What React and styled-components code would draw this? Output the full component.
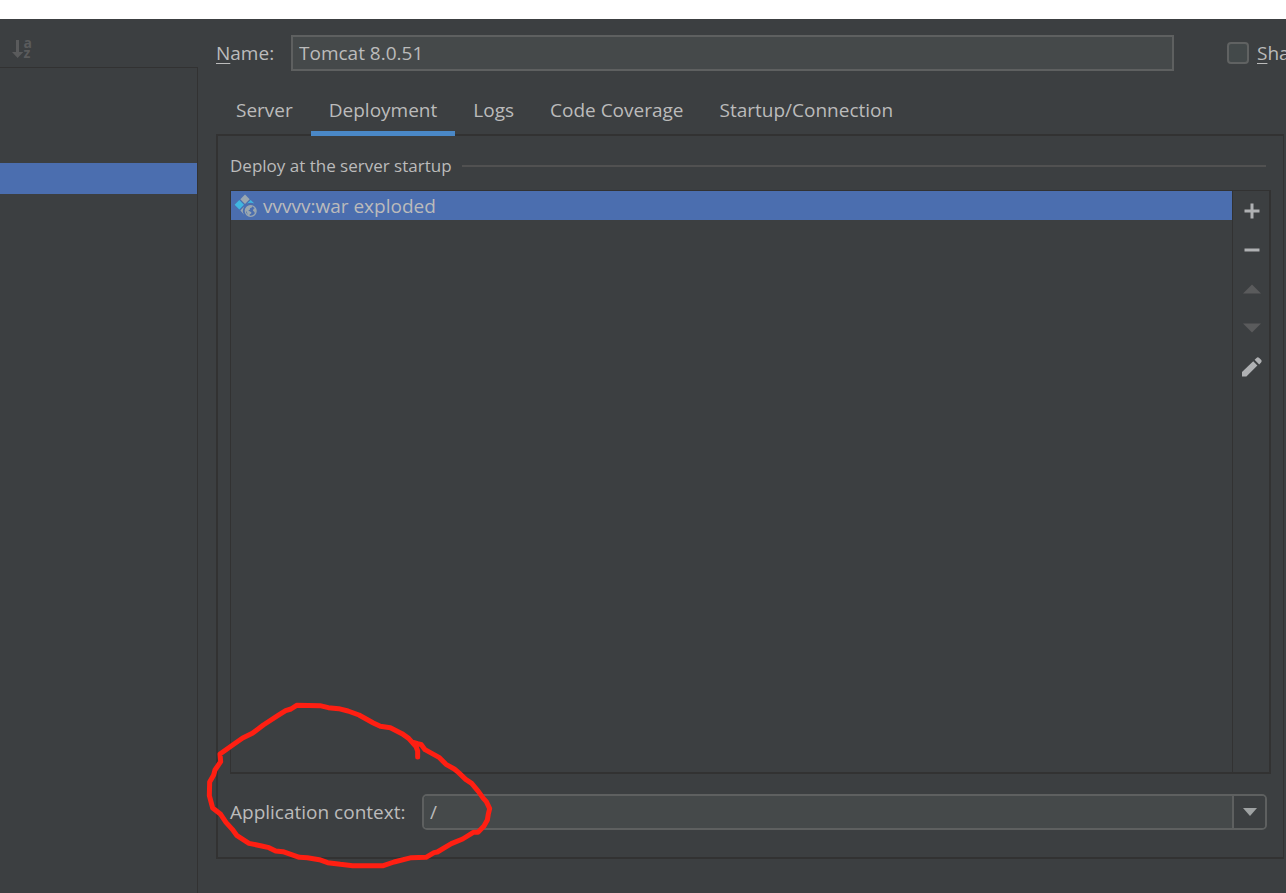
import { useState } from "react";
import styled, { createGlobalStyle } from "styled-components";

const GlobalStyle = createGlobalStyle`
  * {
    box-sizing: border-box;
  }

  body {
    margin: 0;
    background: #ffffff;
    overflow: hidden;
  }

  body, input, button {
    font-family: "Open Sans", "Noto Sans", sans-serif;
    font-size: 19px;
    color: #bbbbbb;
  }
`;

const Page = styled.div`
  min-height: 100vh;
  padding-top: 19px;
  display: flex;
`;

const Dialog = styled.div`
  flex: 1;
  min-width: 0;
  display: flex;
  background: #3c3f41;
`;

const Sidebar = styled.aside`
  flex: 0 0 198px;
  display: flex;
  flex-direction: column;
`;

const SidebarTools = styled.div`
  height: 48px;
  padding: 18px 0 0 10px;
`;

const ConfigList = styled.div`
  flex: 1;
  padding-top: 95px;
  border-top: 1px solid #323232;
  border-right: 1px solid #323232;
`;

const ConfigItem = styled.div`
  height: 31px;
  background: #4b6eaf;
`;

const Main = styled.main`
  flex: 1;
  min-width: 0;
  display: flex;
  flex-direction: column;
  padding-left: 18px;
`;

const NameRow = styled.div`
  display: flex;
  align-items: center;
  padding-top: 16px;
`;

const NameLabel = styled.label`
  flex: 0 0 75px;
`;

const Mnemonic = styled.span`
  text-decoration: underline;
  text-underline-offset: 3px;
`;

const NameInput = styled.input`
  flex: 1;
  min-width: 0;
  height: 36px;
  padding: 0 6px;
  background: #45494a;
  border: 2px solid #5e6060;
  outline: none;
`;

const ShareLabel = styled.label`
  flex: 0 0 59px;
  display: flex;
  align-items: center;
  gap: 8px;
  margin-left: 53px;
  overflow: hidden;
  white-space: nowrap;
`;

const Checkbox = styled.input`
  appearance: none;
  flex: none;
  width: 22px;
  height: 22px;
  margin: 0;
  background: #43494a;
  border: 2px solid #606262;
  border-radius: 4px;

  &:checked {
    background: #4b6eaf;
  }
`;

const Tabs = styled.div`
  display: flex;
  margin-top: 13px;
  padding-left: 2px;
`;

const Tab = styled.button`
  height: 52px;
  padding: 5px 18px 0;
  background: none;
  border: 0;
  border-bottom: 5px solid ${(props) => (props.$active ? "#4a88c7" : "transparent")};
  position: relative;
  z-index: 1;
  cursor: pointer;
`;

const Panel = styled.section`
  flex: 1;
  display: flex;
  flex-direction: column;
  position: relative;
  margin: -2px 2px 34px 0;
  padding: 18px 12px 27px;
  border: 2px solid #323232;
  border-right-width: 1px;
`;

const GroupTitle = styled.h2`
  display: flex;
  align-items: center;
  gap: 10px;
  margin: 0 5px 12px 0;
  font-size: 17px;
  font-weight: 400;
  line-height: 24px;

  &::after {
    content: "";
    flex: 1;
    height: 2px;
    background: #515151;
  }
`;

const Artifacts = styled.div`
  flex: 1;
  display: flex;
  border: 1px solid #323232;
  border-right-width: 2px;
  border-bottom-width: 2px;
`;

const ArtifactList = styled.div`
  flex: 1;
`;

const Artifact = styled.div`
  display: flex;
  align-items: center;
  gap: 6px;
  height: 29px;
  padding-left: 3px;
  background: #4b6eaf;
`;

const Actions = styled.div`
  flex: 0 0 37px;
  display: flex;
  flex-direction: column;
  align-items: flex-end;
  border-left: 1px solid #323232;
`;

const ActionButton = styled.button`
  display: flex;
  align-items: center;
  justify-content: center;
  width: 35px;
  height: 39px;
  padding: 0;
  background: none;
  border: 0;
  color: #afb1b3;

  &:disabled {
    color: #5a5b5c;
  }
`;

const ContextRow = styled.div`
  display: flex;
  align-items: center;
  margin: 20px 4px 0 0;
`;

const ContextLabel = styled.label`
  flex: 0 0 192px;
`;

const Combo = styled.div`
  flex: 1;
  display: flex;
  height: 36px;
  border: 2px solid #5e6060;
  border-radius: 5px;
  overflow: hidden;
`;

const ComboInput = styled.input`
  flex: 1;
  min-width: 0;
  padding: 0 6px;
  background: #45494a;
  border: 0;
  outline: none;
`;

const ComboButton = styled.button`
  flex: 0 0 33px;
  display: flex;
  align-items: center;
  justify-content: center;
  padding: 0;
  background: #3c3f41;
  border: 0;
  border-left: 2px solid #5e6060;
`;

const Marker = styled.svg`
  position: absolute;
  left: -18px;
  bottom: -36px;
  z-index: 2;
  pointer-events: none;
`;

const SortIcon = () => (
  <svg width="24" height="24" viewBox="0 0 24 24" fill="#5a5b5c" overflow="visible" aria-hidden="true">
    <path d="M6 3h3v12h4.300L7.600 21L2 15h4z" />
    <text x="13.500" y="11" fontSize="14" fontWeight="700">a</text>
    <text x="13.500" y="21" fontSize="14" fontWeight="700">z</text>
  </svg>
);

const ArtifactIcon = () => (
  <svg width="23" height="24" viewBox="0 0 23 24" aria-hidden="true">
    <path d="M11 0.500l4.700 4.700L11 9.900L6.300 5.200z" fill="#9aa7b0" />
    <path d="M5.300 6l4.700 4.700l-4.700 4.700l-4.700-4.700z" fill="#40b6e0" />
    <path d="M16.700 6l3.600 3.500a9 9 0 0 0-7.200 0z" fill="#40b6e0" />
    <path d="M10.400 12.200a8 8 0 0 0-.3 8.600L6.400 16.500z" fill="#9aa7b0" />
    <circle cx="16.700" cy="17" r="5.400" fill="none" stroke="#9aa7b0" strokeWidth="1.300" />
    <path d="M12 14.200c1.400-2.200 4-3.200 6.300-2.400l-.5 1.800l-1.800.6l-.2 1.500l-1.600.8l3.200 1.700l-.2 1.400l-1.600.9l-.3 2c-1.800-1-1.900-3.300-2.500-4.600l-1.500-1.600z" fill="#9aa7b0" />
    <path d="M19.600 14.800l2-.8c.7 2 .5 4-.6 5.600l-.8-1.900l-1.300-.9z" fill="#9aa7b0" />
  </svg>
);

const AddIcon = () => (
  <svg width="16" height="16" viewBox="0 0 16 16" fill="currentColor" aria-hidden="true">
    <path d="M6.500 0.500h3v6h6v3h-6v6h-3v-6h-6v-3h6z" />
  </svg>
);

const RemoveIcon = () => (
  <svg width="16" height="16" viewBox="0 0 16 16" fill="currentColor" aria-hidden="true">
    <path d="M0.500 6.500h15v3h-15z" />
  </svg>
);

const UpIcon = () => (
  <svg width="18" height="10" viewBox="0 0 18 10" fill="currentColor" aria-hidden="true">
    <path d="M9 0.500l9 9H0z" />
  </svg>
);

const DownIcon = () => (
  <svg width="18" height="10" viewBox="0 0 18 10" fill="currentColor" aria-hidden="true">
    <path d="M0 0.500h18l-9 9z" />
  </svg>
);

const EditIcon = () => (
  <svg width="22" height="22" viewBox="0 0 22 22" fill="currentColor" aria-hidden="true">
    <path d="M1 16L12.200 5.200l4.200 4.200L5.400 20.400H1z" />
    <path d="M13.600 3.800l1.900-1.900q1.300-1.300 2.700 0l1.900 1.900q1.300 1.300 0 2.700l-1.900 1.900z" />
  </svg>
);

const actions = [
  { id: "add", label: "Add", icon: <AddIcon /> },
  { id: "remove", label: "Remove", icon: <RemoveIcon /> },
  { id: "up", label: "Move up", icon: <UpIcon />, disabled: true },
  { id: "down", label: "Move down", icon: <DownIcon />, disabled: true },
  { id: "edit", label: "Edit", icon: <EditIcon /> },
];

const tabs = ["Server", "Deployment", "Logs", "Code Coverage", "Startup/Connection"];

const App = () => {
  const [activeTab, setActiveTab] = useState("Deployment");

  return (
    <Page>
      <GlobalStyle />
      <Dialog>
        <Sidebar>
          <SidebarTools>
            <SortIcon />
          </SidebarTools>
          <ConfigList>
            <ConfigItem />
          </ConfigList>
        </Sidebar>
        <Main>
          <NameRow>
            <NameLabel htmlFor="name">
              <Mnemonic>N</Mnemonic>ame:
            </NameLabel>
            <NameInput id="name" defaultValue="Tomcat 8.0.51" />
            <ShareLabel>
              <Checkbox type="checkbox" />
              <span>
                <Mnemonic>S</Mnemonic>hare
              </span>
            </ShareLabel>
          </NameRow>
          <Tabs role="tablist">
            {tabs.map((tab) => (
              <Tab
                key={tab}
                role="tab"
                aria-selected={tab === activeTab}
                $active={tab === activeTab}
                onClick={() => setActiveTab(tab)}
              >
                {tab}
              </Tab>
            ))}
          </Tabs>
          <Panel>
            <GroupTitle>Deploy at the server startup</GroupTitle>
            <Artifacts>
              <ArtifactList>
                <Artifact>
                  <ArtifactIcon />
                  vvvvv:war exploded
                </Artifact>
              </ArtifactList>
              <Actions>
                {actions.map((action) => (
                  <ActionButton key={action.id} aria-label={action.label} disabled={action.disabled}>
                    {action.icon}
                  </ActionButton>
                ))}
              </Actions>
            </Artifacts>
            <ContextRow>
              <ContextLabel htmlFor="context">Application context:</ContextLabel>
              <Combo>
                <ComboInput id="context" defaultValue="/" />
                <ComboButton aria-label="Show contexts">
                  <svg width="14" height="8" viewBox="0 0 14 8" fill="#9fa2a3" aria-hidden="true">
                    <path d="M0 0h14L7 8z" />
                  </svg>
                </ComboButton>
              </Combo>
            </ContextRow>
            <Marker width="310" height="203" viewBox="0 0 930 609" aria-hidden="true">
              <path
                d="M653 201L653 183L648 170L626 145L606 131L571 113L541 109L520 99L477 75L444 63L416 56L385 53L360 47L290 46L273 57L257 62L233 77L190 105L157 130L128 144L98 165L60 192L62 215L45 240L41 255L29 276L28 317L38 354L62 373L78 397L97 418L111 437L147 460L185 468L207 473L227 483L249 485L298 502L322 503L358 509L383 518L421 523L458 527L550 527L582 516L634 503L678 502L702 488L712 486L754 461L788 447L820 427L834 427L852 408L862 390L865 372L869 356L859 335L850 325L835 304L815 280L797 268L776 248L763 237L738 223L717 202L675 179L663 163L653 161L640 157"
                fill="none"
                stroke="#ff1f12"
                strokeWidth="15"
                strokeLinecap="round"
                strokeLinejoin="round"
              />
            </Marker>
          </Panel>
        </Main>
      </Dialog>
    </Page>
  );
};

export default App;
